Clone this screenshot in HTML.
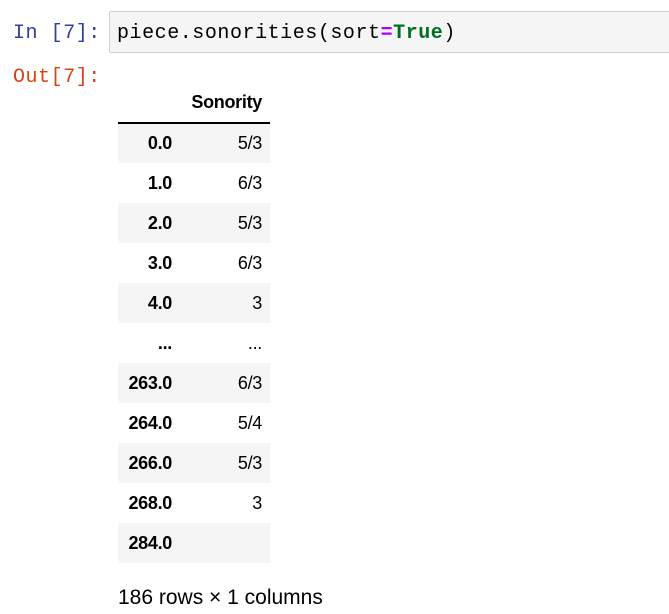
<!DOCTYPE html>
<html><head><style>
body{margin:0;width:669px;height:614px;background:#fff;position:relative;overflow:hidden;font-family:"Liberation Sans",sans-serif}
.mono{font-family:"Liberation Mono",monospace;font-size:20px;letter-spacing:0.55px;position:absolute}
.inp{position:absolute;left:109px;top:11px;width:570px;height:42px;background:#f5f5f5;border:1px solid #cfcfcf;border-radius:2px;box-sizing:border-box}
table{position:absolute;left:118px;top:83px;border-collapse:collapse;font-size:18px;color:#000;letter-spacing:-0.3px}
td,th{height:40px;padding:0 8px;text-align:right;box-sizing:border-box}
th{font-weight:bold}
tbody tr:nth-child(odd){background:#f5f5f5}
thead th{height:40px;border-bottom:2px solid #000}
td.i{font-weight:bold;width:62px}
td.v{width:90px}
</style></head><body>
<div class="mono" style="left:13px;top:22px;color:#303f9f">In [7]:</div>
<div class="inp"></div>
<div class="mono" style="left:117px;top:22px;color:#000">piece.sonorities(sort<span style="color:#a0f;font-weight:bold">=</span><span style="color:#007020;font-weight:bold">True</span>)</div>
<div class="mono" style="left:13px;top:66px;color:#d84315">Out[7]:</div>
<table>
<thead><tr><th></th><th>Sonority</th></tr></thead>
<tbody>
<tr><td class="i">0.0</td><td class="v">5/3</td></tr>
<tr><td class="i">1.0</td><td class="v">6/3</td></tr>
<tr><td class="i">2.0</td><td class="v">5/3</td></tr>
<tr><td class="i">3.0</td><td class="v">6/3</td></tr>
<tr><td class="i">4.0</td><td class="v">3</td></tr>
<tr style="background:#fff"><td class="i">...</td><td class="v">...</td></tr>
<tr><td class="i">263.0</td><td class="v">6/3</td></tr>
<tr style="background:#fff"><td class="i">264.0</td><td class="v">5/4</td></tr>
<tr><td class="i">266.0</td><td class="v">5/3</td></tr>
<tr style="background:#fff"><td class="i">268.0</td><td class="v">3</td></tr>
<tr><td class="i">284.0</td><td class="v"></td></tr>
</tbody></table>
<div style="position:absolute;left:118px;top:586px;font-size:21px">186 rows × 1 columns</div>
</body></html>
